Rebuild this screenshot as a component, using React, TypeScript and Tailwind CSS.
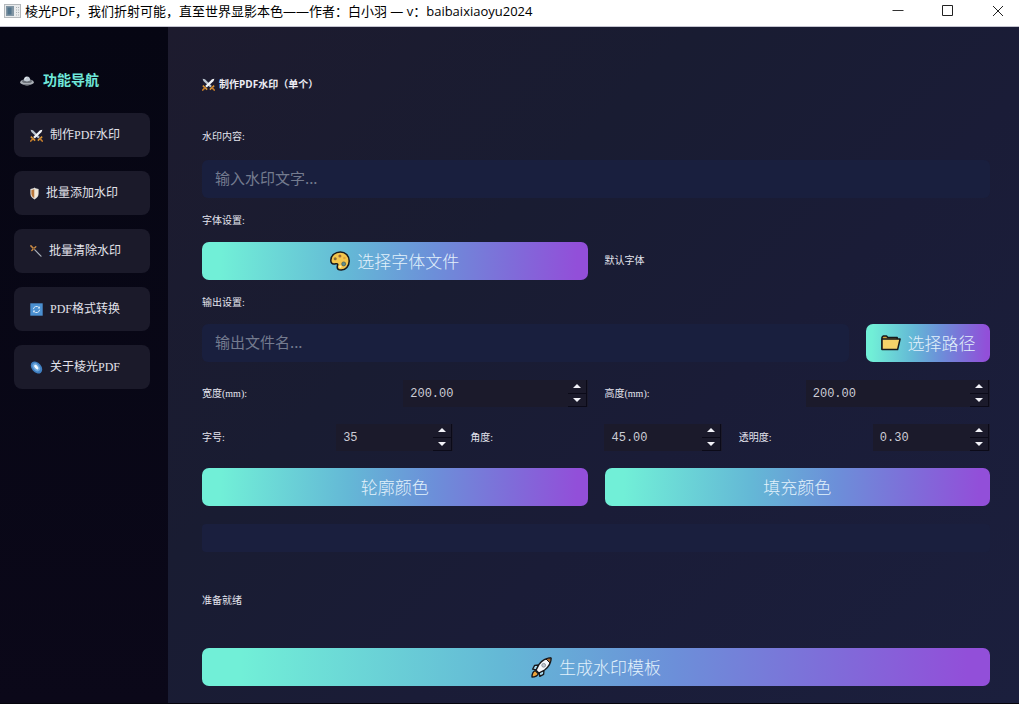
import { useState } from "react";
import type { ComponentType, ReactNode } from "react";

const SwordsIcon = () => (
  <svg width="13" height="13" viewBox="0 0 13 13" fill="none">
    <path d="M.6.8 3 1.200 9.800 8 8.200 9.600 1.400 3Z" fill="#bcc6d0" />
    <path d="M12.400.8 10 1.200 3.200 8l1.600 1.600L11.600 3Z" fill="#f2f5f8" />
    <path d="M.8 7.600 5.200 11.600M12.200 7.600 7.800 11.600" stroke="#dd9833" strokeWidth="1.500" />
    <path d="M3 9.600.8 12M10 9.600 12.200 12" stroke="#c07a2c" strokeWidth="1.700" strokeLinecap="round" />
  </svg>
);

const ShieldIcon = () => (
  <svg width="9" height="13" viewBox="0 0 9 13">
    <path d="M4.500.6C3.200 1.600 1.800 2 .4 2v4.400c0 2.800 1.600 4.600 4.100 6 2.500-1.400 4.100-3.200 4.100-6V2C7.200 2 5.800 1.600 4.500.6Z" fill="#e3e1dd" />
    <path d="M4.300 1.900C3.400 2.500 2.400 2.900 1.400 3v3.400c0 2.100 1.100 3.500 2.900 4.600Z" fill="#b9773a" />
    <path d="M4.800 1.900v9.100c1.800-1.100 2.800-2.500 2.800-4.600V3c-1-.1-1.900-.5-2.800-1.100Z" fill="#f6ead6" />
  </svg>
);

const DaggerIcon = () => (
  <svg width="12" height="12" viewBox="0 0 12 12" fill="none" strokeLinecap="round">
    <path d="M4.400 4.400 11 11.200" stroke="#a9b1bb" strokeWidth="1.200" />
    <path d="M.9.9 4 4" stroke="#c98a45" strokeWidth="1.500" />
    <path d="M5.800 1.800 1.800 5.600" stroke="#c98a45" strokeWidth="1.400" />
    <circle cx="3.900" cy="3.900" r=".8" fill="#5b3d22" />
  </svg>
);

const ConvertIcon = () => (
  <svg width="13" height="13" viewBox="0 0 13 13" fill="none">
    <rect x=".3" y=".3" width="12.400" height="12.400" fill="#4a8fd0" />
    <path d="M3.400 6.200a3.200 3.200 0 0 1 5.600-1.700M9.600 6.800A3.200 3.200 0 0 1 4 8.500" stroke="#d8e9f8" strokeWidth="1" />
    <path d="M9.900 3.200v2.300H7.600ZM3.100 9.800V7.500h2.300Z" fill="#d8e9f8" />
  </svg>
);

const GalaxyIcon = () => (
  <svg width="13" height="13" viewBox="0 0 13 13">
    <ellipse cx="6.500" cy="6.500" rx="6.800" ry="4.800" transform="rotate(50 6.500 6.500)" fill="#3f7fc1" />
    <ellipse cx="6.300" cy="6.300" rx="4.600" ry="3" transform="rotate(50 6.300 6.300)" fill="#6fa8dc" />
    <ellipse cx="6.300" cy="6.100" rx="2.800" ry="1.500" transform="rotate(50 6.300 6.100)" fill="#f4faff" />
  </svg>
);

const UfoIcon = () => (
  <svg width="14" height="12" viewBox="0 0 14 12">
    <ellipse cx="7" cy="7.200" rx="6.800" ry="3" fill="#a9aeb5" />
    <ellipse cx="7" cy="6.200" rx="5" ry="1.900" fill="#6b7078" />
    <path d="M3.800 5.600a3.200 4 0 0 1 6.400 0c-1.600 1.100-4.800 1.100-6.400 0Z" fill="#c3ccd6" />
    <path d="M5 4.400A2 2.400 0 0 1 6.800 2.300" stroke="#f4f7fa" strokeWidth=".8" fill="none" />
    <path d="M3 9.300c2 1.800 6 1.800 8 0Z" fill="#6d727a" />
  </svg>
);

const PaletteIcon = () => (
  <svg width="20" height="20" viewBox="0 0 20 20">
    <path
      d="M10.400.9C15.400.9 19.200 4.800 19.200 10c0 5-3.600 9.100-8 9.100-2.500 0-4-1.300-4-3.100 0-1.700 1-2.300.4-3-.6-.8-1.700-.1-3.700-.1C1.800 12.900.8 11.400.8 9.200.8 4.500 5.200.9 10.400.9Z"
      fill="#f3c64d" stroke="#17181c" strokeWidth="1.500"
    />
    <circle cx="5.200" cy="7.800" r="1.500" fill="#8b6a35" />
    <circle cx="9.900" cy="4.900" r="1.500" fill="#a0693a" />
    <circle cx="14.400" cy="7" r="1.300" fill="#e0a33c" />
    <circle cx="13.700" cy="12.900" r="2" fill="#5f8f8c" stroke="#3a4c50" strokeWidth=".6" />
    <circle cx="10.300" cy="15.600" r="1.200" fill="#fff0b8" />
  </svg>
);

const FolderIcon = () => (
  <svg width="20" height="16" viewBox="0 0 20 16" strokeLinejoin="round">
    <path d="M1 14.600V2.200L2.200 1h3.300l1.300 1.500h9.400v2.200" fill="#d9a63a" stroke="#17181c" strokeWidth="1.500" />
    <path d="M1 14.600V4h18.100L16.600 14.600Z" fill="#f6d36a" stroke="#17181c" strokeWidth="1.500" />
  </svg>
);

const RocketIcon = () => (
  <svg width="21" height="21" viewBox="0 0 21 21" strokeLinejoin="round">
    <path d="M4.200 13.600C1.800 14.600 1 17.400 1 20c2.600 0 5.400-.8 6.400-3.200Z" fill="#f0a53a" stroke="#17181c" strokeWidth="1.300" />
    <path d="M7.600 8 3.600 8.400 1.600 12.200l4 .6ZM13 13.400l-.4 4-3.800 2-.6-4Z" fill="#a5d8ee" stroke="#17181c" strokeWidth="1.300" />
    <path d="M20 1c-4.800 0-9 2.200-12 6.400l-3 5.800 2.800 2.800 5.800-3C17.800 10 20 5.800 20 1Z" fill="#f7f8fa" stroke="#17181c" strokeWidth="1.400" />
    <path d="M20 1c-1.800 0-3.400.3-5 1l4 4c.7-1.600 1-3.200 1-5Z" fill="#a9682f" stroke="#17181c" strokeWidth="1" />
    <circle cx="12.700" cy="8.300" r="1.900" fill="#c3c9d1" stroke="#7f8791" strokeWidth=".8" />
  </svg>
);

const AppIcon = () => (
  <svg width="17" height="14" viewBox="0 0 17 14">
    <rect x=".5" y=".5" width="16" height="13" fill="#e9ebec" stroke="#b5b9bc" />
    <rect x="2" y="2" width="8" height="10" fill="#8195a3" />
    <rect x="3.500" y="3.500" width="4" height="7" fill="#53758c" />
    <path d="M12.500 3v8.500M14.500 3v8.500" stroke="#a9b0b4" strokeDasharray="1 1.500" />
  </svg>
);

const navItems: { label: string; icon: ComponentType }[] = [
  { label: "制作PDF水印", icon: SwordsIcon },
  { label: "批量添加水印", icon: ShieldIcon },
  { label: "批量清除水印", icon: DaggerIcon },
  { label: "PDF格式转换", icon: ConvertIcon },
  { label: "关于棱光PDF", icon: GalaxyIcon },
];

const labelClass = "text-[10px] leading-[18px] text-[#e4e4ee]";
const inputClass =
  "h-[38px] w-full min-w-0 rounded-md bg-[#191f3e] px-[13px] pb-1 font-['Noto_Sans_CJK_SC',sans-serif] text-[15px] text-[#d8dcea] outline-none placeholder:text-[#747b8f]";

function GradientButton({ children, className = "" }: { children: ReactNode; className?: string }) {
  return (
    <button
      type="button"
      className={`flex h-[38px] items-center justify-center gap-[7px] rounded-[7px] bg-[linear-gradient(92deg,#71efd7_5%,#64b8d6_38%,#6c8fd9_60%,#7f6cd9_80%,#924fd9_97%)] font-['Noto_Sans_CJK_SC',sans-serif] text-[17px] font-light text-[#e2f1fb] ${className}`}
    >
      {children}
    </button>
  );
}

interface SpinBoxProps {
  id: string;
  label: string;
  initial: number;
  step: number;
  digits: number;
}

function SpinBox({ id, label, initial, step, digits }: SpinBoxProps) {
  const [text, setText] = useState(initial.toFixed(digits));
  const change = (delta: number) => setText((Number(text) + delta).toFixed(digits));

  return (
    <>
      <label htmlFor={id} className={`self-center ${labelClass}`}>
        {label}
      </label>
      <div className="flex h-[27px] min-w-0 bg-[#1b1a2b]">
        <input
          id={id}
          value={text}
          onChange={(e) => setText(e.target.value)}
          className="w-0 min-w-0 flex-1 bg-transparent pt-px pl-[7px] font-['Liberation_Mono',monospace] text-xs text-[#cdcdd6] outline-none"
        />
        <div className="flex w-5 flex-col pr-px">
          <button
            type="button"
            aria-label="增加"
            onClick={() => change(step)}
            className="flex flex-1 items-center justify-center border-r border-b border-[#0b0a18]"
          >
            <svg width="8" height="4" viewBox="0 0 8 4" fill="#f2f2f8"><path d="M4 0 8 4H0Z" /></svg>
          </button>
          <button
            type="button"
            aria-label="减少"
            onClick={() => change(-step)}
            className="flex flex-1 items-center justify-center border-r border-b border-[#0b0a18]"
          >
            <svg width="8" height="4" viewBox="0 0 8 4" fill="#f2f2f8"><path d="M0 0h8L4 4Z" /></svg>
          </button>
        </div>
      </div>
    </>
  );
}

export default function App() {
  return (
    <div className="flex min-h-screen flex-col bg-[#0a0818] font-['Liberation_Serif','Noto_Sans_CJK_SC',serif]">
      {/* Title bar */}
      <header className="flex h-[27px] items-center border-b border-[#c4c4d0] bg-white pr-px pb-1 pl-1 text-black">
        <AppIcon />
        <h1 className="ml-1 flex-1 font-['Open_Sans','Noto_Sans_CJK_SC',sans-serif] text-[13px] leading-5 whitespace-nowrap">
          棱光PDF，我们折射可能，直至世界显影本色——作者：白小羽 — v：baibaixiaoyu2024
        </h1>
        <div className="flex gap-[10px]">
          <button type="button" aria-label="最小化" className="flex w-10 items-center justify-center">
            <svg width="12" height="12" viewBox="0 0 12 12" stroke="#333" fill="none"><path d="M.5 5.500h11" /></svg>
          </button>
          <button type="button" aria-label="最大化" className="flex w-10 items-center justify-center">
            <svg width="12" height="12" viewBox="0 0 12 12" stroke="#222" fill="none"><path d="M.5.5h10v10H.5Z" /></svg>
          </button>
          <button type="button" aria-label="关闭" className="flex w-10 items-center justify-center">
            <svg width="12" height="12" viewBox="0 0 12 12" stroke="#222" fill="none"><path d="m1 1 10 10M11 1 1 11" /></svg>
          </button>
        </div>
      </header>

      <div className="flex flex-1 border-b border-[#05040c]">
        {/* Sidebar */}
        <aside className="w-[168px] shrink-0 bg-gradient-to-b from-[#060613] to-[#0b0819] pt-11 pr-[18px] pl-[14px]">
          <h2 className="flex items-center gap-[9px] pl-[6px] text-[14px] leading-5 font-bold text-[#6fe8da]">
            <UfoIcon />
            功能导航
          </h2>
          <nav className="mt-[22px] flex flex-col gap-[14px]">
            {navItems.map(({ label, icon: Icon }) => (
              <button
                key={label}
                type="button"
                className="flex h-11 items-center gap-[7px] rounded-lg bg-[#1b1a2a] px-4 text-xs whitespace-nowrap text-[#e2e2ea]"
              >
                <Icon />
                {label}
              </button>
            ))}
          </nav>
        </aside>

        {/* Watermark form */}
        <main className="flex min-w-0 flex-1 flex-col bg-[linear-gradient(135deg,#1d1b2e,#191c32_35%,#1a1c37_60%,#1b1f3d)] pt-[49px] pr-[29px] pb-[17px] pl-[34px]">
          <h2 className="flex items-center gap-1 font-['Open_Sans','Noto_Sans_CJK_SC',sans-serif] text-[10px] leading-4 font-bold text-[#ececf4]">
            <SwordsIcon />
            制作PDF水印（单个）
          </h2>

          <label htmlFor="content" className={`mt-9 ${labelClass}`}>水印内容:</label>
          <input id="content" placeholder="输入水印文字..." className={`mt-[14px] ${inputClass}`} />

          <p className={`mt-[14px] ${labelClass}`}>字体设置:</p>
          <div className="mt-3 grid grid-cols-2 items-center gap-[17px]">
            <GradientButton>
              <PaletteIcon />
              选择字体文件
            </GradientButton>
            <span className={labelClass}>默认字体</span>
          </div>

          <label htmlFor="output" className={`mt-[14px] ${labelClass}`}>输出设置:</label>
          <div className="mt-3 flex gap-[17px]">
            <input id="output" placeholder="输出文件名..." className={inputClass} />
            <GradientButton className="w-[124px] shrink-0">
              <FolderIcon />
              选择路径
            </GradientButton>
          </div>

          <div className="mt-[18px] grid grid-cols-4 gap-[17px]">
            <SpinBox id="width" label="宽度(mm):" initial={200} step={1} digits={2} />
            <SpinBox id="height" label="高度(mm):" initial={200} step={1} digits={2} />
          </div>
          <div className="mt-[17px] grid grid-cols-6 gap-[17px]">
            <SpinBox id="size" label="字号:" initial={35} step={1} digits={0} />
            <SpinBox id="angle" label="角度:" initial={45} step={1} digits={2} />
            <SpinBox id="opacity" label="透明度:" initial={0.3} step={0.1} digits={2} />
          </div>

          <div className="mt-[17px] grid grid-cols-2 gap-[17px]">
            <GradientButton>轮廓颜色</GradientButton>
            <GradientButton>填充颜色</GradientButton>
          </div>

          <div role="progressbar" aria-label="进度" aria-valuenow={0} className="mt-[18px] h-7 rounded-sm bg-[#1a1f3e]" />

          <p className={`mt-10 ${labelClass}`}>准备就绪</p>

          <GradientButton className="mt-[38px]">
            <RocketIcon />
            生成水印模板
          </GradientButton>
        </main>
      </div>
    </div>
  );
}
